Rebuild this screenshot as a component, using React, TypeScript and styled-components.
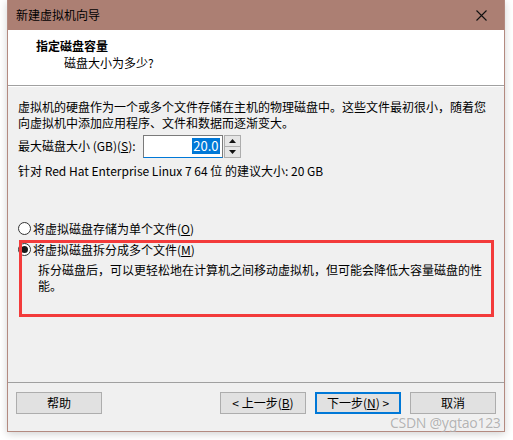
import React from "react";
import styled, { createGlobalStyle } from "styled-components";

const GlobalStyle = createGlobalStyle`
  html, body {
    margin: 0;
    padding: 0;
    background: #ffffff;
  }
  body {
    font-family: "Microsoft YaHei", "Noto Sans CJK SC", "Noto Sans", sans-serif;
    font-size: 12px;
    color: #000;
  }
`;

const Page = styled.div`
  width: 513px;
  height: 440px;
  position: relative;
  overflow: hidden;
`;

const Window = styled.div`
  margin-left: 7px;
  width: 496px;
  height: 431px;
  border: 1px solid #b38a80;
  border-top: none;
  background: #f0f0f0;
  display: flex;
  flex-direction: column;
  box-shadow: 0 2px 8px rgba(0, 0, 0, 0.18);
`;

const TitleBar = styled.div`
  height: 30px;
  background: #ac7f73;
  display: flex;
  align-items: center;
  justify-content: space-between;
  padding: 0 8px 0 8px;
  flex-shrink: 0;
`;

const TitleText = styled.span`
  line-height: 16px;
  padding-bottom: 1px;
`;

const CloseBtn = styled.div`
  width: 30px;
  height: 30px;
  display: flex;
  align-items: center;
  justify-content: center;
`;

const Header = styled.div`
  height: 56px;
  background: #ffffff;
  border-bottom: 1px solid #a0a0a0;
  padding: 8px 0 0 28px;
  box-sizing: border-box;
  flex-shrink: 0;
`;

const HeaderTitle = styled.div`
  font-weight: bold;
  line-height: 16px;
`;

const HeaderSub = styled.div`
  line-height: 16px;
  margin: 1px 0 0 28px;
`;

const Body = styled.div`
  flex: 1;
  padding: 12px 10px 0 10px;
  border-top: 1px solid #ffffff;
`;

const Para = styled.div`
  line-height: 16px;
`;

const SizeRow = styled.div`
  display: flex;
  align-items: center;
  margin-top: 3px;
  height: 24px;
`;

const Label = styled.span`
  line-height: 16px;
  margin-right: 7px;
`;

const U = styled.span`
  text-decoration: underline;
`;

const NumBox = styled.div`
  width: 80px;
  height: 23px;
  box-sizing: border-box;
  border: 1px solid #7a7a7a;
  border-bottom-color: #0078d7;
  background: #fff;
  display: flex;
  align-items: center;
  justify-content: flex-end;
  padding-right: 2px;
`;

const Selected = styled.span`
  background: #0078d7;
  color: #fff;
  line-height: 16px;
  font-size: 13px;
  padding: 0 1px;
`;

const Spinner = styled.div`
  width: 17px;
  height: 23px;
  margin-left: 1px;
  box-sizing: border-box;
  border: 1px solid #adadad;
  display: flex;
  flex-direction: column;
`;

const SpinBtn = styled.div`
  flex: 1;
  background: #e5e5e5;
  display: flex;
  align-items: center;
  justify-content: center;
  & + & {
    border-top: 1px solid #adadad;
  }
`;

const Recommend = styled.div`
  line-height: 16px;
  margin-top: 5px;
`;

const Options = styled.div`
  margin-top: 39px;
  position: relative;
`;

const RadioRow = styled.div`
  display: flex;
  align-items: center;
  height: 20px;
  margin-bottom: 1px;
`;

const RadioCircle = styled.span<{ $checked?: boolean }>`
  flex-shrink: 0;
  width: 13px;
  height: 13px;
  box-sizing: border-box;
  border: 1px solid #333;
  border-radius: 50%;
  background: #fff;
  display: inline-flex;
  align-items: center;
  justify-content: center;
  margin-right: 2px;
  &::after {
    content: "";
    width: 7px;
    height: 7px;
    border-radius: 50%;
    background: #1a1a1a;
    display: ${(p) => (p.$checked ? "block" : "none")};
  }
`;

const Desc = styled.div`
  margin: 3px 0 0 20px;
  line-height: 16px;
  width: 452px;
`;

const RedBox = styled.div`
  position: absolute;
  left: 1px;
  top: 22px;
  width: 475px;
  height: 77px;
  box-sizing: border-box;
  border: 3px solid #f33b3b;
`;

const Footer = styled.div`
  height: 39px;
  border-top: 1px solid #a0a0a0;
  display: flex;
  align-items: flex-start;
  padding: 9px 8px 0 8px;
  flex-shrink: 0;
`;

const Button = styled.div<{ $default?: boolean }>`
  width: 86px;
  height: 22px;
  box-sizing: border-box;
  border: ${(p) => (p.$default ? "2px solid #0078d7" : "1px solid #adadad")};
  background: #e1e1e1;
  display: flex;
  align-items: center;
  justify-content: center;
  line-height: 16px;
`;

const Spacer = styled.div`
  flex: 1;
`;

const Gap = styled.div`
  width: 9px;
`;

const Watermark = styled.div`
  position: absolute;
  left: 390px;
  top: 413px;
  font-family: "Noto Sans", sans-serif;
  font-size: 14px;
  letter-spacing: -0.3px;
  color: rgba(120, 120, 120, 0.55);
  text-shadow: 0 0 1px rgba(255, 255, 255, 0.8);
`;

export default function App() {
  return (
    <Page>
      <GlobalStyle />
      <Window>
        <TitleBar>
          <TitleText>新建虚拟机向导</TitleText>
          <CloseBtn>
            <svg width="11" height="11" viewBox="0 0 11 11">
              <path d="M0.5 0.5 L10.5 10.5 M10.5 0.5 L0.5 10.5" stroke="#111" strokeWidth="1.1" />
            </svg>
          </CloseBtn>
        </TitleBar>
        <Header>
          <HeaderTitle>指定磁盘容量</HeaderTitle>
          <HeaderSub>磁盘大小为多少?</HeaderSub>
        </Header>
        <Body>
          <Para>
            虚拟机的硬盘作为一个或多个文件存储在主机的物理磁盘中。这些文件最初很小，随着您
            <br />
            向虚拟机中添加应用程序、文件和数据而逐渐变大。
          </Para>
          <SizeRow>
            <Label>
              最大磁盘大小 (GB)(<U>S</U>):
            </Label>
            <NumBox>
              <Selected>20.0</Selected>
            </NumBox>
            <Spinner>
              <SpinBtn>
                <svg width="7" height="4" viewBox="0 0 7 4">
                  <path d="M0 4 L3.5 0 L7 4 Z" fill="#111" />
                </svg>
              </SpinBtn>
              <SpinBtn>
                <svg width="7" height="4" viewBox="0 0 7 4">
                  <path d="M0 0 L3.5 4 L7 0 Z" fill="#111" />
                </svg>
              </SpinBtn>
            </Spinner>
          </SizeRow>
          <Recommend>针对 Red Hat Enterprise Linux 7 64 位 的建议大小: 20 GB</Recommend>
          <Options>
            <RadioRow>
              <RadioCircle />
              将虚拟磁盘存储为单个文件(<U>O</U>)
            </RadioRow>
            <RadioRow>
              <RadioCircle $checked />
              将虚拟磁盘拆分成多个文件(<U>M</U>)
            </RadioRow>
            <Desc>拆分磁盘后，可以更轻松地在计算机之间移动虚拟机，但可能会降低大容量磁盘的性能。</Desc>
            <RedBox />
          </Options>
        </Body>
        <Footer>
          <Button>帮助</Button>
          <Spacer />
          <Button>
            &lt; 上一步(<U>B</U>)
          </Button>
          <Gap />
          <Button $default>
            下一步(<U>N</U>) &gt;
          </Button>
          <Gap />
          <Button>取消</Button>
        </Footer>
      </Window>
      <Watermark>CSDN @ygtao123</Watermark>
    </Page>
  );
}
